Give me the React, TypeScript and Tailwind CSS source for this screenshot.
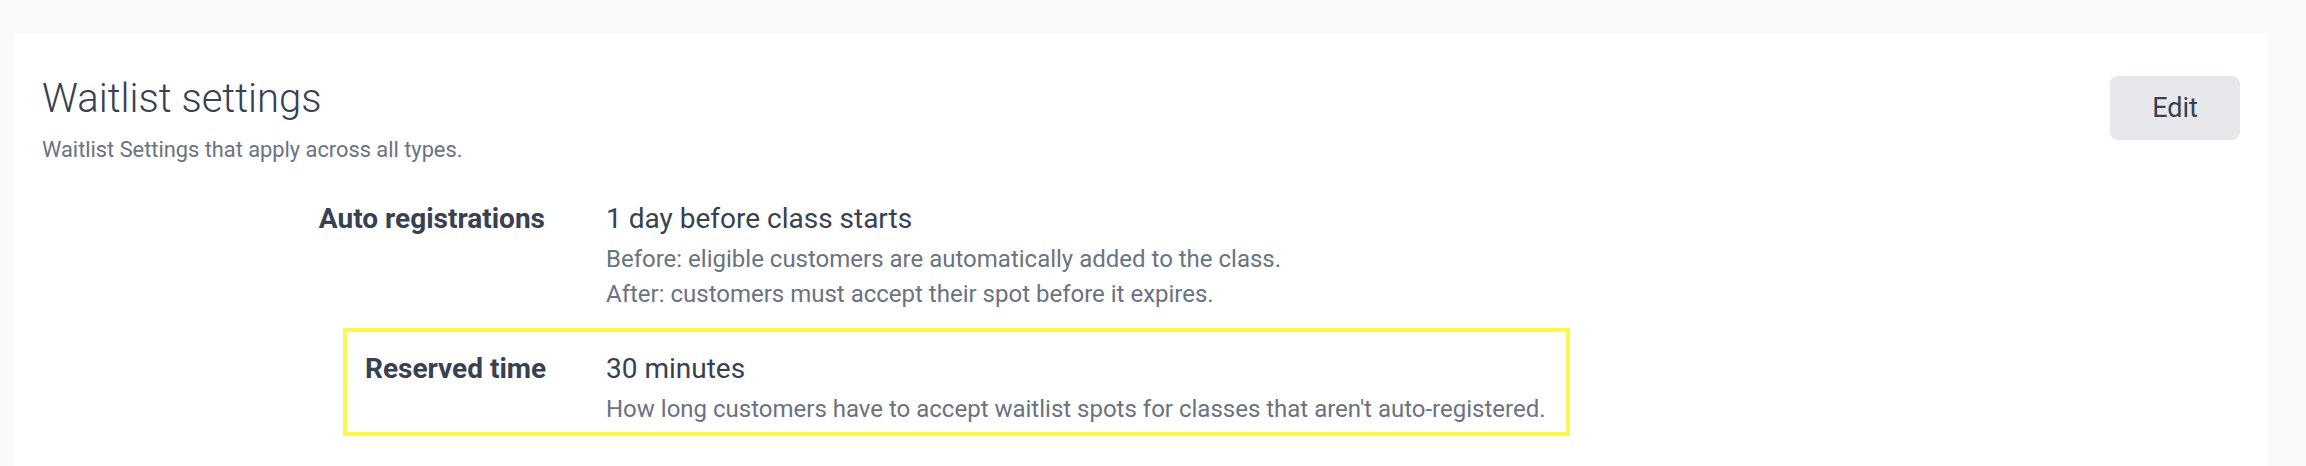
export default function App() {
  return (
    <div
      className="flex h-screen flex-col bg-[#f9fafb] pl-[14px] pr-[38px] pt-[33px]"
      style={{ fontFamily: "Roboto, 'Noto Sans', sans-serif" }}
    >
      <div className="flex-1 bg-white px-[28px] pt-[42px]">
        <div className="flex items-start justify-between">
          <div>
            <h1 className="text-[40px] font-light leading-[48px] text-[#374151]">
              Waitlist settings
            </h1>
            <p className="mt-[12px] text-[21.8px] leading-[30px] text-[#6b7280]">
              Waitlist Settings that apply across all types.
            </p>
          </div>
          <button className="mt-[1px] flex h-[64px] w-[130px] items-center justify-center rounded-[8px] bg-[#e7e8ec] text-[27px] text-[#374151]">
            Edit
          </button>
        </div>

        <div className="mt-[36px] flex flex-col">
          <div className="flex gap-[61px]">
            <div className="w-[503px] shrink-0 whitespace-nowrap text-right text-[28px] font-bold leading-[36px] text-[#374151]">
              Auto registrations
            </div>
            <div>
              <div className="text-[28px] leading-[36px] text-[#374151]">
                1 day before class starts
              </div>
              <div className="mt-[5px] text-[24px] leading-[35px] text-[#6b7280]">
                <p>Before: eligible customers are automatically added to the class.</p>
                <p>After: customers must accept their spot before it expires.</p>
              </div>
            </div>
          </div>

          <div className="ml-[301px] mt-[16px] flex w-fit gap-[61px] border-4 border-[#fdf751] pb-[6px] pl-[18px] pr-[20px] pt-[19px]">
            <div className="w-[180px] shrink-0 whitespace-nowrap text-right text-[28px] font-bold leading-[36px] text-[#374151]">
              Reserved time
            </div>
            <div>
              <div className="text-[28px] leading-[36px] text-[#374151]">30 minutes</div>
              <div className="mt-[6px] text-[24px] leading-[33px] text-[#6b7280]">
                How long customers have to accept waitlist spots for classes that aren&apos;t
                auto-registered.
              </div>
            </div>
          </div>
        </div>
      </div>
    </div>
  );
}
